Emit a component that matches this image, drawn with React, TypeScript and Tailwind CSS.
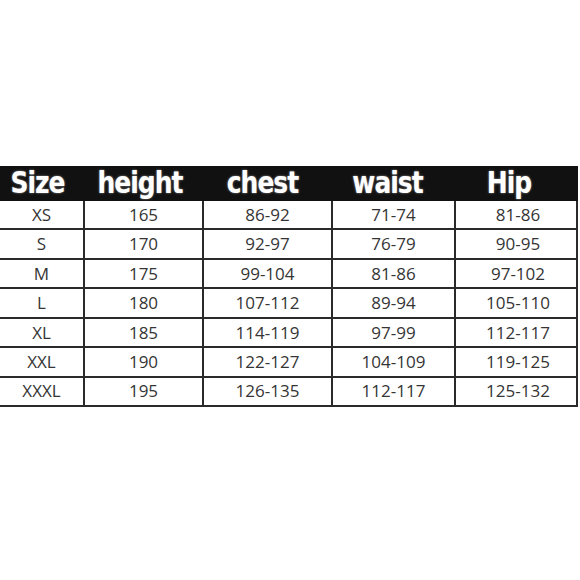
import React from "react";

const headers = ["Size", "height", "chest", "waist", "Hip"];
const headerPad = ["pr-[8px]", "pr-[5px]", "pr-[8px]", "pr-[10px]", "pr-[14px]"];
const rows = [
  ["XS", "165", "86-92", "71-74", "81-86"],
  ["S", "170", "92-97", "76-79", "90-95"],
  ["M", "175", "99-104", "81-86", "97-102"],
  ["L", "180", "107-112", "89-94", "105-110"],
  ["XL", "185", "114-119", "97-99", "112-117"],
  ["XXL", "190", "122-127", "104-109", "119-125"],
  ["XXXL", "195", "126-135", "112-117", "125-132"],
];

const cols = "grid grid-cols-[83px_119px_129px_123px_124px]";

export default function App() {
  return (
    <div className="w-[580px] h-[580px] bg-white pt-[166px] overflow-hidden">
      <div className="w-[578px]">
        <div className={`${cols} h-[35px] bg-[#111111]`}>
          {headers.map((h, i) => (
            <div
              key={h}
              className={`flex items-end justify-center pb-[3px] ${headerPad[i]}`}
            >
              <span className="font-['DejaVu_Sans',sans-serif] font-bold text-[25px] leading-none tracking-[-1px] text-white scale-y-[1.18] origin-bottom [text-shadow:0_0_2px_#9a9a9a]">
                {h}
              </span>
            </div>
          ))}
        </div>
        <div className="border-r-2 border-[#2a2a2a]">
          {rows.map((r, ri) => (
            <div
              key={ri}
              className={`${cols} h-[29.43px] border-b-2 border-[#2a2a2a]`}
            >
              {r.map((c, ci) => (
                <div
                  key={ci}
                  className={`flex items-center justify-center font-['Open_Sans',sans-serif] text-[17px] text-[#353535] ${
                    ci > 0 ? "border-l-2 border-[#2a2a2a]" : ""
                  } ${ci === 4 ? "-mr-[2px]" : ""}`}
                >
                  {c}
                </div>
              ))}
            </div>
          ))}
        </div>
      </div>
    </div>
  );
}
